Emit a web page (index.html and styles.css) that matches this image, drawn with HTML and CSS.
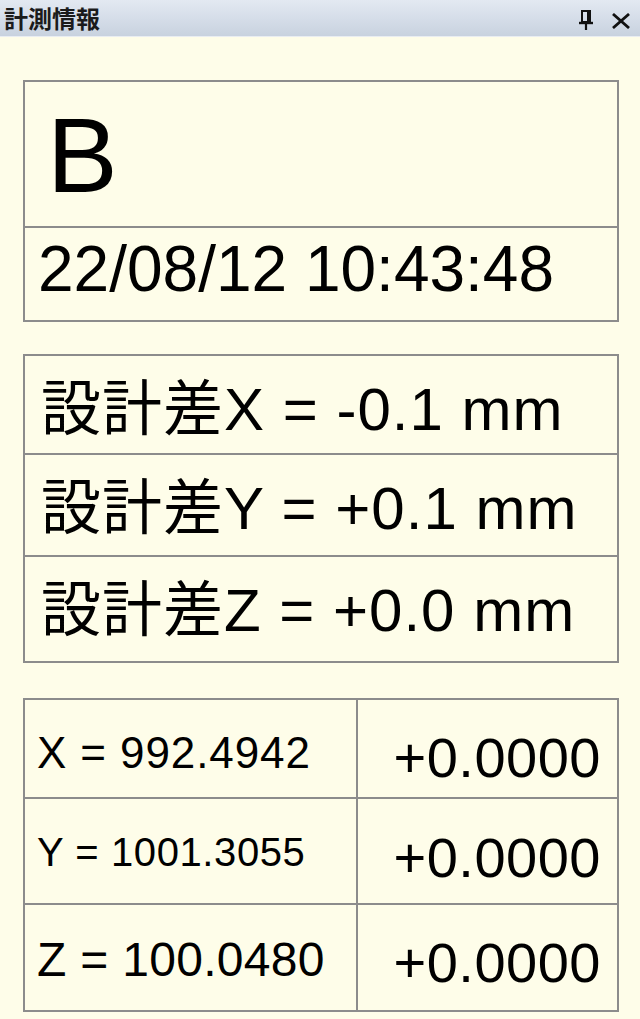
FILE: index.html
```html
<!DOCTYPE html>
<html lang="ja">
<head>
<meta charset="utf-8">
<title>計測情報</title>
<link rel="stylesheet" href="styles.css">
</head>
<body>
<header class="titlebar">
  <span class="title">計測情報</span>
  <div class="tools">
    <svg class="pin" width="16" height="22" viewBox="0 0 16 22">
      <path d="M4 2 H12 V13 H4 Z" fill="none" stroke="#111" stroke-width="2"/>
      <path d="M10 2 V13" stroke="#111" stroke-width="2"/>
      <path d="M1 14 H15" stroke="#111" stroke-width="2.4"/>
      <path d="M8 14 V21" stroke="#111" stroke-width="2.2"/>
    </svg>
    <svg class="close" width="20" height="16" viewBox="0 0 20 16">
      <path d="M2 1 L18 15 M18 1 L2 15" stroke="#111" stroke-width="2.8" fill="none"/>
    </svg>
  </div>
</header>
<main class="content">
  <section class="box box-id">
    <div class="row row-name">B</div>
    <div class="row row-date">22/08/12 10:43:48</div>
  </section>
  <section class="box box-diff">
    <div class="row diff d1">設計差X = -0.1 mm</div>
    <div class="row diff d2">設計差Y = +0.1 mm</div>
    <div class="row diff d3">設計差Z = +0.0 mm</div>
  </section>
  <section class="box box-coords">
    <div class="cell c-left r1 fx">X = 992.4942</div>
    <div class="cell c-right r1">+0.0000</div>
    <div class="cell c-left r2 fy">Y = 1001.3055</div>
    <div class="cell c-right r2">+0.0000</div>
    <div class="cell c-left r3 fz">Z = 100.0480</div>
    <div class="cell c-right r3">+0.0000</div>
  </section>
</main>
</body>
</html>
```
FILE: styles.css
```css
html, body {
  margin: 0;
  padding: 0;
}
body {
  width: 640px;
  height: 1019px;
  background: #fefde9;
  font-family: "Liberation Sans", Arial, "Noto Sans CJK JP", sans-serif;
  color: #000;
  overflow: hidden;
}
.titlebar {
  height: 37px;
  box-sizing: border-box;
  display: flex;
  align-items: center;
  justify-content: space-between;
  padding: 0 9px 0 4px;
  background: linear-gradient(#e3e9f2, #c8d2df);
  border-bottom: 1px solid #e9edf2;
}
.title {
  font-family: "Noto Sans CJK JP", sans-serif;
  font-weight: 700;
  font-size: 24px;
  line-height: 1;
  color: #1b1b1b;
}
.tools {
  display: flex;
  align-items: center;
  gap: 17px;
  padding-top: 3px;
}
.tools .close {
  margin-top: 3px;
}
.content {
  padding: 43px 21px 0 23px;
  display: flex;
  flex-direction: column;
}
.box {
  border: 2px solid #8c8c8c;
  display: flex;
  flex-direction: column;
}
.row {
  box-sizing: border-box;
  line-height: 1;
  white-space: nowrap;
}
.row + .row {
  border-top: 2px solid #8c8c8c;
}
.row-name {
  height: 144px;
  font-size: 106px;
  padding: 20px 0 0 22px;
}
.row-date {
  height: 94px;
  font-size: 64px;
  padding: 9px 0 0 13px;
}
.box-diff {
  margin-top: 32px;
}
.diff {
  font-size: 60px;
  letter-spacing: 1px;
  padding: 24px 0 0 16px;
}
.d1 { height: 97px; }
.d2 { height: 102px; }
.d3 { height: 106px; }
.box-coords {
  margin-top: 35px;
  display: grid;
  grid-template-columns: 333px 1fr;
  grid-template-rows: 97px 106px 107px;
}
.cell {
  box-sizing: border-box;
  line-height: 1;
  white-space: nowrap;
}
.c-left {
  border-right: 2px solid #8c8c8c;
  padding-left: 12px;
}
.c-right {
  text-align: right;
  font-size: 56px;
  letter-spacing: 0.5px;
  padding-right: 16px;
  padding-top: 30px;
}
.r2, .r3 {
  border-top: 2px solid #8c8c8c;
}
.fx { font-size: 44px; letter-spacing: 0.9px; padding-top: 31px; }
.fy { font-size: 40px; letter-spacing: 0.6px; padding-top: 33px; }
.fz { font-size: 48px; letter-spacing: 0.3px; padding-top: 31px; }
.r2.c-right { padding-top: 31px; }
.r3.c-right { padding-top: 30px; }
```
